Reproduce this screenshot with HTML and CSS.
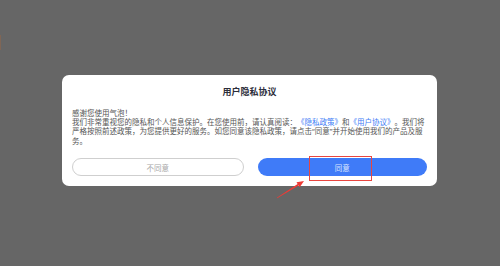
FILE: index.html
```html
<!DOCTYPE html>
<html lang="zh-CN">
<head>
<meta charset="utf-8">
<link rel="stylesheet" href="styles.css">
</head>
<body>
<div class="page">
  <span class="edge-mark"></span>
  <div class="dialog">
    <h1 class="title">用户隐私协议</h1>
    <div class="content">
      <p>感谢您使用气泡！</p>
      <p>我们非常重视您的隐私和个人信息保护。在您使用前，请认真阅读：<span class="link">《隐私政策》</span>和<span class="link">《用户协议》</span>。我们将严格按照前述政策，为您提供更好的服务。如您同意该隐私政策，请点击<span class="quote">“</span>同意<span class="quote">”</span>并开始使用我们的产品及服务。</p>
    </div>
    <div class="actions">
      <button class="btn btn-decline">不同意</button>
      <button class="btn btn-agree">同意</button>
    </div>
  </div>
  <span class="highlight-box"></span>
  <svg class="annotation" width="500" height="266" viewBox="0 0 500 266">
    <polygon points="276.8,197.7 297.6,183.9 296.5,182.2 304,181 299.7,187.2 298.6,185.5 277.2,198.3" fill="#ee3b36"/>
  </svg>
</div>
</body>
</html>
```

FILE: styles.css
```css
* { box-sizing: border-box; }
html, body {
  margin: 0;
  padding: 0;
  background: #666666;
}
body {
  font-family: "Noto Sans CJK SC", "Noto Sans", sans-serif;
}
.page {
  position: relative;
  width: 500px;
  height: 266px;
  padding-top: 75px;
}
.edge-mark {
  position: absolute;
  left: 0;
  top: 35px;
  width: 1px;
  height: 15px;
  background: #7f6656;
}
.dialog {
  width: 375px;
  height: 111px;
  margin-left: 62px;
  background: #ffffff;
  border-radius: 7px;
  padding: 11px 10px 10px 10px;
  display: flex;
  flex-direction: column;
}
.title {
  margin: 0;
  font-size: 9px;
  line-height: 12px;
  font-weight: 700;
  color: #2b2d3a;
  text-align: center;
}
.content {
  margin-top: 10px;
  font-size: 7.5px;
  line-height: 9px;
  color: #555555;
  text-spacing-trim: space-all;
}
.content p { margin: 0; }
.link { color: #3d7cf6; }
.quote { font-family: "Noto Sans", sans-serif; }
.actions {
  margin-top: auto;
  display: flex;
  gap: 14px;
}
.btn {
  flex: 1;
  height: 18px;
  border-radius: 9px;
  font-family: inherit;
  font-size: 7.5px;
  padding: 0;
}
.btn-decline {
  background: #ffffff;
  border: 1px solid #cfcfcf;
  color: #a8a8a8;
}
.btn-agree {
  background: #3f7bf8;
  border: none;
  color: #dbe6ff;
}
.highlight-box {
  position: absolute;
  left: 309px;
  top: 156px;
  width: 63px;
  height: 25px;
  border: 1px solid #e8463f;
}
.annotation {
  position: absolute;
  left: 0;
  top: 0;
  pointer-events: none;
}
```
